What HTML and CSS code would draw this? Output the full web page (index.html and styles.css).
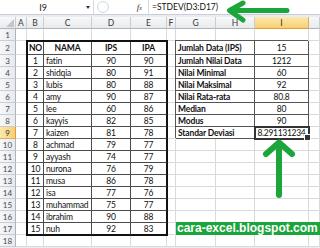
FILE: index.html
```html
<!DOCTYPE html>
<html lang="id">
<head>
<meta charset="utf-8">
<title>STDEV</title>
<link rel="stylesheet" href="styles.css">
</head>
<body>
<div class="app">
  <div class="fbar">
    <div class="namebox"><span class="nb-text">I9</span><span class="dd"></span></div>
    <div class="fbtns"><span class="knob"></span><span class="fx">f<span class="fxs">x</span></span></div>
    <div class="formula">=STDEV(D3:D17)</div>
  </div>
  <div class="sheet">
    <div class="ch corner"><svg width="8" height="8" viewBox="0 0 8 8"><path d="M8 0V8H0Z" fill="#c3c7cc"/></svg></div>
    <div class="ch">A</div><div class="ch">B</div><div class="ch">C</div><div class="ch">D</div><div class="ch">E</div><div class="ch">F</div><div class="ch">G</div><div class="ch">H</div><div class="ch on">I</div><div class="ch"></div>

    <div class="rh">1</div><div class="c"></div><div class="c"></div><div class="c"></div><div class="c"></div><div class="c"></div><div class="c"></div><div class="c"></div><div class="c"></div><div class="c"></div><div class="c"></div>
    <div class="rh">2</div><div class="c"></div><div class="c"></div><div class="c"></div>
    <div class="rh">3</div><div class="c"></div><div class="c"></div><div class="c"></div>
    <div class="rh">4</div><div class="c"></div><div class="c"></div><div class="c"></div>
    <div class="rh">5</div><div class="c"></div><div class="c"></div><div class="c"></div>
    <div class="rh">6</div><div class="c"></div><div class="c"></div><div class="c"></div>
    <div class="rh">7</div><div class="c"></div><div class="c"></div><div class="c"></div>
    <div class="rh">8</div><div class="c"></div><div class="c"></div><div class="c"></div>
    <div class="rh on">9</div><div class="c"></div><div class="c"></div><div class="c"></div>
    <div class="rh">10</div><div class="c"></div><div class="c"></div><div class="c"></div><div class="c"></div><div class="c"></div><div class="c"></div>
    <div class="rh">11</div><div class="c"></div><div class="c"></div><div class="c"></div><div class="c"></div><div class="c"></div><div class="c"></div>
    <div class="rh">12</div><div class="c"></div><div class="c"></div><div class="c"></div><div class="c"></div><div class="c"></div><div class="c"></div>
    <div class="rh">13</div><div class="c"></div><div class="c"></div><div class="c"></div><div class="c"></div><div class="c"></div><div class="c"></div>
    <div class="rh">14</div><div class="c"></div><div class="c"></div><div class="c"></div><div class="c"></div><div class="c"></div><div class="c"></div>
    <div class="rh">15</div><div class="c"></div><div class="c"></div><div class="c"></div><div class="c"></div><div class="c"></div><div class="c"></div>
    <div class="rh">16</div><div class="c"></div><div class="c"></div><div class="c"></div><div class="c"></div><div class="c"></div><div class="c"></div>
    <div class="rh">17</div><div class="c"></div><div class="c"></div><div class="c"></div><div class="c"></div><div class="c"></div><div class="c"></div>
    <div class="rh">18</div><div class="c"></div><div class="c"></div><div class="c"></div><div class="c"></div><div class="c"></div><div class="c"></div><div class="c"></div><div class="c"></div><div class="c"></div><div class="c"></div>

    <div class="t1">
      <div class="b">NO</div><div class="b">NAMA</div><div class="b">IPS</div><div class="b">IPA</div>
      <div>1</div><div class="l">fatin</div><div>90</div><div>90</div>
      <div>2</div><div class="l">shidqia</div><div>80</div><div>91</div>
      <div>3</div><div class="l">lubis</div><div>80</div><div>88</div>
      <div>4</div><div class="l">amy</div><div>90</div><div>87</div>
      <div>5</div><div class="l">lee</div><div>60</div><div>86</div>
      <div>6</div><div class="l">kayyis</div><div>82</div><div>85</div>
      <div>7</div><div class="l">kaizen</div><div>81</div><div>78</div>
      <div>8</div><div class="l">achmad</div><div>79</div><div>77</div>
      <div>9</div><div class="l">ayyash</div><div>74</div><div>77</div>
      <div>10</div><div class="l">nurona</div><div>76</div><div>79</div>
      <div>11</div><div class="l">musa</div><div>86</div><div>78</div>
      <div>12</div><div class="l">isa</div><div>77</div><div>76</div>
      <div>13</div><div class="l">muhammad</div><div>75</div><div>77</div>
      <div>14</div><div class="l">ibrahim</div><div>90</div><div>88</div>
      <div>15</div><div class="l">nuh</div><div>92</div><div>83</div>
    </div>

    <div class="t2">
      <div class="lbl">Jumlah Data (IPS)</div><div>15</div>
      <div class="lbl">Jumlah Nilai Data</div><div>1212</div>
      <div class="lbl">Nilai Minimal</div><div>60</div>
      <div class="lbl">Nilai Maksimal</div><div>92</div>
      <div class="lbl">Nilai Rata-rata</div><div>80.8</div>
      <div class="lbl">Median</div><div>80</div>
      <div class="lbl">Modus</div><div>90</div>
      <div class="lbl">Standar Deviasi</div><div class="cur">8.291131234</div>
    </div>
  </div>

  <svg class="arrows" width="320" height="248" viewBox="0 0 320 248">
    <g fill="none" stroke="#1ba53b" stroke-linecap="round" stroke-linejoin="round">
      <path d="M287 10.5H230M243 3L229.5 10.5L243 20" stroke-width="5"/>
      <path d="M279 195V144M266 154L279 142.5L292 154" stroke-width="6"/>
    </g>
  </svg>
  <div class="wm">cara-excel.blogspot.com</div>
</div>
</body>
</html>
```

FILE: styles.css
```css
* { box-sizing: border-box; margin: 0; padding: 0; }
html, body { width: 320px; height: 248px; overflow: hidden; background: #fff; }
body { font-family: Lato, "Liberation Sans", sans-serif; font-size: 8.5px; color: #000; }

.app { position: relative; width: 320px; height: 248px; background: #e9ecf0; }

.fbar { display: flex; height: 15px; background: #fff; border-bottom: 1px solid #c9ced6; }
.namebox { width: 94px; display: flex; align-items: center; border-right: 1px solid #d6dbe2; font-size: 9px; }
.nb-text { flex: 1; text-align: center; color: #222; }
.dd { width: 0; height: 0; border-left: 2.5px solid transparent; border-right: 2.5px solid transparent; border-top: 3px solid #333; margin-right: 3px; }
.fbtns { width: 54px; display: flex; align-items: center; }
.knob { width: 12px; height: 12px; border-radius: 50%; border: 1px solid #d3d6da; margin-left: 3px; }
.fx { margin-left: auto; margin-right: 6px; font-family: "Liberation Serif", serif; font-style: italic; font-size: 9px; color: #333; }
.fxs { font-size: 6px; }
.formula { flex: 1; border-left: 1px solid #d6dbe2; padding-left: 3px; display: flex; align-items: center; font-size: 8.5px; color: #111; }

.sheet {
  display: grid;
  grid-template-columns: 16px 11px 17px 48px 39px 36px 9px 40px 39px 54px 11px;
  grid-template-rows: 12px 12px 14px repeat(15, 12px) 12px;
  margin-top: 2px;
  background: #fff;
}
.c { background: #fff; border-right: 1px solid #dadada; border-bottom: 1px solid #dadada; }
.ch {
  display: flex; align-items: center; justify-content: center;
  background: linear-gradient(#f8f9fa, #e7e9ec);
  border-right: 1px solid #c9cdd3; border-bottom: 1px solid #aeb4bc;
  color: #3a3a3a; font-size: 8.5px;
}
.corner { justify-content: flex-end; align-items: flex-end; padding: 0 1px 1px 0; }
.rh {
  display: flex; align-items: center; justify-content: center;
  background: linear-gradient(90deg, #f6f7f9, #e8eaed);
  border-right: 1px solid #aeb4bc; border-bottom: 1px solid #c9cdd3;
  color: #4a4a4a; font-size: 8px;
}
.ch.on { background: linear-gradient(#fde8ad, #f7cf72); border-bottom-color: #e49b3c; border-right-color: #d9b06a; color: #333; }
.rh.on { background: linear-gradient(90deg, #fde8ad, #f7cf72); border-right-color: #e49b3c; border-bottom-color: #d9b06a; color: #333; }

.t1 {
  grid-column: 3 / 7; grid-row: 3 / 19;
  display: grid;
  grid-template-columns: 16px 48px 39px 36px;
  grid-template-rows: 13px repeat(15, 12px);
  background: #fff;
  border-left: 1px solid #111; border-top: 1px solid #111;
  box-shadow: 0 0 0 1px #111;
}
.t1 > div, .t2 > div {
  display: flex; align-items: center; justify-content: center;
  white-space: nowrap; letter-spacing: -0.15px; color: #111;
}
.t1 > div { border-right: 1px solid #4a4a4a; border-bottom: 1px solid #4a4a4a; }
.t1 > div:nth-child(4n) { border-right-color: #111; }
.t1 > div:nth-last-child(-n+4) { border-bottom-color: #111; }
.t1 > .l { justify-content: flex-start; padding-left: 2px; }
.t1 > .b { font-weight: 700; }

.t2 {
  grid-column: 8 / 11; grid-row: 3 / 11;
  display: grid;
  grid-template-columns: 79px 54px;
  grid-template-rows: 14px repeat(7, 12px);
  background: #fff;
  box-shadow: -1px -1px 0 #555;
}
.t2 > div { border-right: 1px solid #555; border-bottom: 1px solid #555; }
.t2 > .lbl { justify-content: flex-start; padding-left: 2px; font-weight: 700; }
.t2 > .cur { position: relative; outline: 2px solid #333; outline-offset: -1px; letter-spacing: -0.3px; }
.cur::after { content: ""; position: absolute; right: -3px; bottom: -3px; width: 5px; height: 5px; background: #333; border: 1px solid #fff; }

.arrows { position: absolute; left: 0; top: 0; pointer-events: none; }
.wm {
  position: absolute; left: 176px; top: 222px; right: 0; height: 13px;
  background: #1ba53b; color: #fff;
  font-family: "Liberation Sans", sans-serif; font-weight: 700; font-size: 12px; line-height: 13px;
  white-space: nowrap; overflow: hidden; padding-left: 1px;
}
```
